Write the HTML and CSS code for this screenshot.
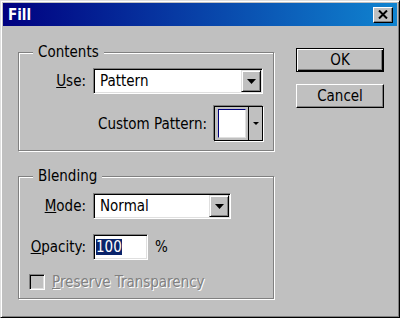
FILE: index.html
```html
<!DOCTYPE html>
<html lang="en">
<head>
  <meta charset="UTF-8" />
  <title>Fill</title>
  <link rel="stylesheet" href="styles.css">
</head>
<body>

  <div class="dialog">
    <!-- Title bar -->
    <div class="titlebar">
      <span class="title">Fill</span>
      <button class="close-btn" title="Close">
        <svg width="10" height="9" viewBox="0 0 10 9">
          <path d="M1 0.5 L9 8.5 M9 0.5 L1 8.5" stroke="#000" stroke-width="2" fill="none"/>
        </svg>
      </button>
    </div>

    <div class="dialog-body">
      <div class="groups">

        <fieldset class="group group-contents">
          <legend>Contents</legend>
          <div class="row row-use">
            <label class="field-label"><u>U</u>se:</label>
            <div class="select select-use">
              <span class="select-value">Pattern</span>
              <span class="drop-btn">
                <svg width="9" height="5" viewBox="0 0 9 5"><path d="M0 0 H9 L4.5 5 Z" fill="#000"/></svg>
              </span>
            </div>
          </div>
          <div class="row row-pattern">
            <label class="field-label">Custom Pattern:</label>
            <div class="pattern-picker">
              <span class="pattern-preview"><span class="pattern-swatch"></span></span>
              <span class="pattern-arrow">
                <svg width="6" height="3" viewBox="0 0 6 3"><path d="M0 0 H6 L3 3 Z" fill="#000"/></svg>
              </span>
            </div>
          </div>
        </fieldset>

        <fieldset class="group group-blending">
          <legend>Blending</legend>
          <div class="row row-mode">
            <label class="field-label"><u>M</u>ode:</label>
            <div class="select select-mode">
              <span class="select-value">Normal</span>
              <span class="drop-btn">
                <svg width="9" height="5" viewBox="0 0 9 5"><path d="M0 0 H9 L4.5 5 Z" fill="#000"/></svg>
              </span>
            </div>
          </div>
          <div class="row row-opacity">
            <label class="field-label"><u>O</u>pacity:</label>
            <div class="text-input"><span class="selected-text">100</span></div>
            <span class="unit">%</span>
          </div>
          <div class="row row-check">
            <span class="checkbox"></span>
            <span class="check-label"><u>P</u>reserve Transparency</span>
          </div>
        </fieldset>

      </div>

      <div class="actions">
        <button class="btn btn-default">OK</button>
        <button class="btn">Cancel</button>
      </div>
    </div>
  </div>

</body>
</html>
```

FILE: styles.css
```css
* {
  box-sizing: border-box;
}
body {
  margin: 0;
  font-family: "DejaVu Sans Condensed", "Liberation Sans", sans-serif;
  font-size: 15px;
  color: #000;
  background: #c0c0c0;
}

/* ==== Window frame ==== */
.dialog {
  width: 400px;
  height: 318px;
  background: #c0c0c0;
  border: 1px solid;
  border-color: #dfdfdf #000 #000 #dfdfdf;
  box-shadow: inset 1px 1px #fff, inset -1px -1px #808080;
  padding: 2px;
}
.titlebar {
  height: 23px;
  display: flex;
  align-items: center;
  justify-content: space-between;
  padding: 0 4px 0 5px;
  background: linear-gradient(to right, #000080, #1084d0);
  color: #fff;
}
.title {
  font-weight: 700;
  font-size: 15px;
}
.close-btn {
  width: 20px;
  height: 16px;
  padding: 0;
  display: flex;
  align-items: center;
  justify-content: center;
  background: #c0c0c0;
  border: 1px solid;
  border-color: #fff #000 #000 #fff;
  box-shadow: inset -1px -1px #808080;
}

/* ==== Body ==== */
.dialog-body {
  display: flex;
  gap: 22px;
  padding: 20px 0 0 15px;
}
.groups {
  width: 256px;
  display: flex;
  flex-direction: column;
  gap: 19px;
}
.group {
  margin: 0;
  min-width: 0;
  padding: 0 10px 0 0;
  border: 1px solid #808080;
  box-shadow: inset 1px 1px #fff, 1px 1px #fff;
}
.group legend {
  margin-left: 14px;
  padding: 0 5px;
  line-height: 12px;
  background: #c0c0c0;
}
.group-contents {
  padding-bottom: 9px;
}
.group-blending {
  padding-bottom: 7px;
}
.row {
  display: flex;
  align-items: center;
}
.row-use { margin-top: 10px; }
.row-pattern { margin-top: 12px; justify-content: flex-end; }
.row-mode { margin-top: 11px; }
.row-opacity { margin-top: 15px; }
.row-check { margin-top: 13px; padding-left: 10px; }

.field-label {
  width: 67px;
  margin-right: 7px;
  text-align: right;
  white-space: nowrap;
}
.row-pattern .field-label {
  width: auto;
}

/* sunken fields */
.select,
.text-input {
  height: 26px;
  display: flex;
  align-items: center;
  padding: 1px;
  background: #fff;
  border: 1px solid;
  border-color: #808080 #fff #fff #808080;
  box-shadow: inset 1px 1px #000, inset -1px -1px #dfdfdf;
}
.select-use { width: 170px; }
.select-mode { width: 138px; }
.select-value {
  flex: 1;
  padding-left: 5px;
}
.drop-btn {
  width: 20px;
  height: 22px;
  display: flex;
  align-items: center;
  justify-content: center;
  background: #c0c0c0;
  border: 1px solid;
  border-color: #dfdfdf #000 #000 #dfdfdf;
  box-shadow: inset 1px 1px #fff, inset -1px -1px #808080;
}

.pattern-picker {
  width: 49px;
  height: 35px;
  display: flex;
  background: #c0c0c0;
  border: 1px solid #000;
  box-shadow: -1px -1px #808080, 1px 1px #fff;
}
.pattern-preview {
  width: 34px;
  padding: 2px 2px 2px 3px;
  border-right: 1px solid #000;
}
.pattern-swatch {
  display: block;
  height: 100%;
  background: #fff;
  border: 1px solid;
  border-color: #000080 #dfdfdf #dfdfdf #000080;
}
.pattern-arrow {
  flex: 1;
  display: flex;
  align-items: center;
  justify-content: center;
}

.text-input {
  width: 55px;
  padding-left: 2px;
}
.selected-text {
  line-height: 16px;
  background: #0a246a;
  color: #fff;
}
.unit {
  margin-left: 7px;
}

.checkbox {
  width: 16px;
  height: 16px;
  background: #c0c0c0;
  border: 1px solid;
  border-color: #808080 #fff #fff #808080;
  box-shadow: inset 1px 1px #000, inset -1px -1px #dfdfdf;
}
.check-label {
  margin-left: 7px;
  color: #808080;
  text-shadow: 1px 1px #fff;
}

/* ==== Buttons ==== */
.actions {
  width: 88px;
  padding-top: 2px;
  display: flex;
  flex-direction: column;
  gap: 12px;
}
.btn {
  height: 24px;
  padding: 0;
  font: inherit;
  color: #000;
  background: #c0c0c0;
  border: 1px solid;
  border-color: #fff #000 #000 #fff;
  box-shadow: inset -1px -1px #808080;
}
.btn-default {
  border-color: #000;
  box-shadow: inset 1px 1px #fff, inset -1px -1px #000, inset -2px -2px #808080;
}
```
